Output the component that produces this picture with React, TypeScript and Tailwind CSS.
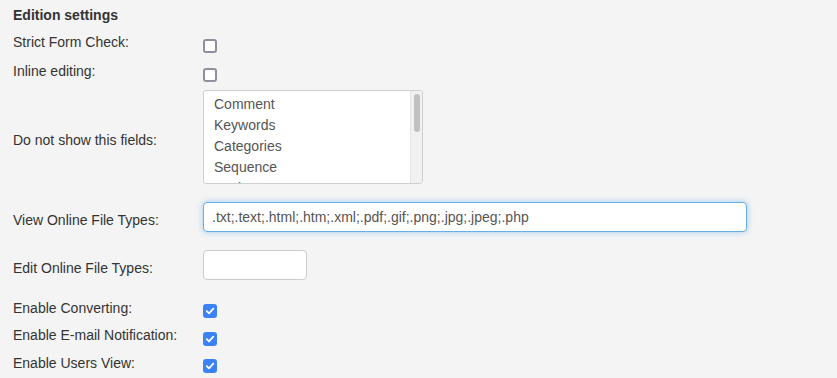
import React from 'react';

const Box: React.FC<{ checked?: boolean }> = ({ checked }) =>
  checked ? (
    <span className="w-[14px] h-[14px] rounded-[3px] bg-[#3b82f6] flex items-center justify-center">
      <svg width="10" height="10" viewBox="0 0 10 10" fill="none">
        <path d="M1.8 5.2 L4 7.3 L8.3 2.6" stroke="white" strokeWidth="1.8" strokeLinecap="round" strokeLinejoin="round" />
      </svg>
    </span>
  ) : (
    <span className="w-[14px] h-[14px] rounded-[3px] border-2 border-[#8f8f9d] bg-white block" />
  );

const Row: React.FC<{ label: string; h: string; lc: string; children: React.ReactNode }> = ({ label, h, lc, children }) => (
  <div className={`flex items-center ${h}`}>
    <div className={`w-[190px] ${lc}`}>{label}</div>
    <div className="flex items-center">{children}</div>
  </div>
);

export default function App() {
  const fields = ['Comment', 'Keywords', 'Categories', 'Sequence', 'Expires'];

  return (
    <div
      className="w-[837px] h-[378px] overflow-hidden bg-[#f4f4f4] text-[#333] text-[14px] pl-[13px]"
      style={{ fontFamily: '"Liberation Sans", Arial, sans-serif' }}
    >
      <div className="h-[30px] flex items-center font-bold">Edition settings</div>

      <Row label="Strict Form Check:" h="h-[31px]" lc="-mt-[7px]">
        <Box />
      </Row>
      <Row label="Inline editing:" h="h-[27px]" lc="-mt-[6px]">
        <Box />
      </Row>

      <Row label="Do not show this fields:" h="h-[98px]" lc="mt-[6px]">
        <div className="w-[220px] h-[94px] bg-white border border-[#cfcfcf] rounded-[3px] flex overflow-hidden">
          <div className="flex-1 pl-[10px] pt-[3px] text-[#555] leading-[21px]">
            {fields.map(f => (
              <div key={f}>{f}</div>
            ))}
          </div>
          <div className="w-[12px] bg-[#f1f1f1] border-l border-[#e6e6e6] pt-[3px] flex justify-center">
            <div className="w-[6px] h-[38px] rounded-full bg-[#c1c1c1]" />
          </div>
        </div>
      </Row>

      <Row label="View Online File Types:" h="h-[61px]" lc="mt-[7px]">
        <input
          readOnly
          value=".txt;.text;.html;.htm;.xml;.pdf;.gif;.png;.jpg;.jpeg;.php"
          className="w-[544px] h-[30px] px-[8px] bg-white text-[#555] text-[14px] border border-[#66afe9] rounded-[4px] outline-none shadow-[0_0_6px_rgba(102,175,233,0.6)]"
          style={{ fontFamily: '"Liberation Sans", Arial, sans-serif' }}
        />
      </Row>
      <Row label="Edit Online File Types:" h="h-[36px]" lc="mt-[6px]">
        <input
          readOnly
          className="w-[104px] h-[30px] px-[8px] bg-white border border-[#ccc] rounded-[4px] outline-none"
        />
      </Row>

      <div className="h-[14px]" />
      <Row label="Enable Converting:" h="h-[28px]" lc="-mt-[6px]">
        <Box checked />
      </Row>
      <Row label="Enable E-mail Notification:" h="h-[27px]" lc="-mt-[7px]">
        <Box checked />
      </Row>
      <Row label="Enable Users View:" h="h-[28px]" lc="-mt-[6px]">
        <Box checked />
      </Row>
    </div>
  );
}
